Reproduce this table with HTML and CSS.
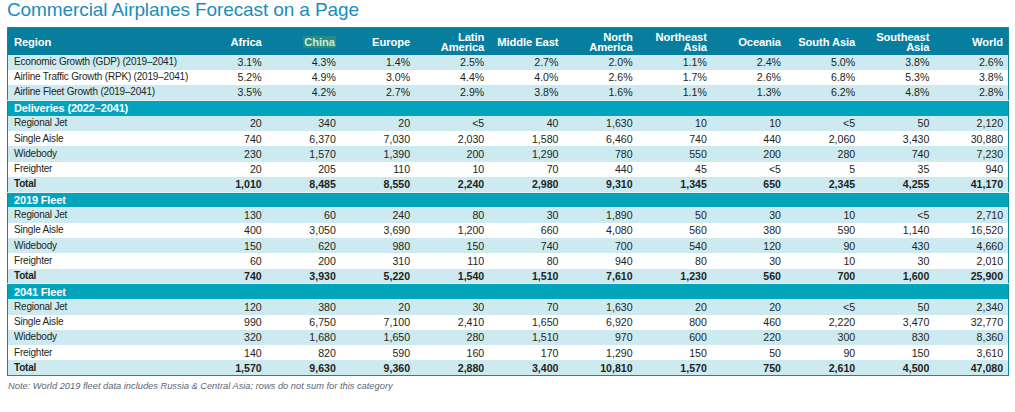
FILE: index.html
```html
<!DOCTYPE html>
<html>
<head>
<meta charset="utf-8">
<link rel="stylesheet" href="styles.css">
</head>
<body>
<h1 class="title">Commercial Airplanes Forecast on a Page</h1>
<table class="fc">
<colgroup><col class="c-label"><col span="11" class="c-num"></colgroup>
<thead>
<tr class="hdr">
<th class="lbl">Region</th><th>Africa</th><th><span class="hl">China</span></th><th>Europe</th><th>Latin<br>America</th><th>Middle East</th><th>North<br>America</th><th>Northeast<br>Asia</th><th>Oceania</th><th>South Asia</th><th>Southeast<br>Asia</th><th>World</th>
</tr>
</thead>
<tbody>
<tr class="lt"><td class="lbl">Economic Growth (GDP) (2019–2041)</td><td>3.1%</td><td>4.3%</td><td>1.4%</td><td>2.5%</td><td>2.7%</td><td>2.0%</td><td>1.1%</td><td>2.4%</td><td>5.0%</td><td>3.8%</td><td>2.6%</td></tr>
<tr class="wh"><td class="lbl">Airline Traffic Growth (RPK) (2019–2041)</td><td>5.2%</td><td>4.9%</td><td>3.0%</td><td>4.4%</td><td>4.0%</td><td>2.6%</td><td>1.7%</td><td>2.6%</td><td>6.8%</td><td>5.3%</td><td>3.8%</td></tr>
<tr class="lt"><td class="lbl">Airline Fleet Growth (2019–2041)</td><td>3.5%</td><td>4.2%</td><td>2.7%</td><td>2.9%</td><td>3.8%</td><td>1.6%</td><td>1.1%</td><td>1.3%</td><td>6.2%</td><td>4.8%</td><td>2.8%</td></tr>
<tr class="sec"><td colspan="12">Deliveries (2022–2041)</td></tr>
<tr class="lt"><td class="lbl">Regional Jet</td><td>20</td><td>340</td><td>20</td><td>&lt;5</td><td>40</td><td>1,630</td><td>10</td><td>10</td><td>&lt;5</td><td>50</td><td>2,120</td></tr>
<tr class="wh"><td class="lbl">Single Aisle</td><td>740</td><td>6,370</td><td>7,030</td><td>2,030</td><td>1,580</td><td>6,460</td><td>740</td><td>440</td><td>2,060</td><td>3,430</td><td>30,880</td></tr>
<tr class="lt"><td class="lbl">Widebody</td><td>230</td><td>1,570</td><td>1,390</td><td>200</td><td>1,290</td><td>780</td><td>550</td><td>200</td><td>280</td><td>740</td><td>7,230</td></tr>
<tr class="wh"><td class="lbl">Freighter</td><td>20</td><td>205</td><td>110</td><td>10</td><td>70</td><td>440</td><td>45</td><td>&lt;5</td><td>5</td><td>35</td><td>940</td></tr>
<tr class="lt tot"><td class="lbl">Total</td><td>1,010</td><td>8,485</td><td>8,550</td><td>2,240</td><td>2,980</td><td>9,310</td><td>1,345</td><td>650</td><td>2,345</td><td>4,255</td><td>41,170</td></tr>
<tr class="sec"><td colspan="12">2019 Fleet</td></tr>
<tr class="lt"><td class="lbl">Regional Jet</td><td>130</td><td>60</td><td>240</td><td>80</td><td>30</td><td>1,890</td><td>50</td><td>30</td><td>10</td><td>&lt;5</td><td>2,710</td></tr>
<tr class="wh"><td class="lbl">Single Aisle</td><td>400</td><td>3,050</td><td>3,690</td><td>1,200</td><td>660</td><td>4,080</td><td>560</td><td>380</td><td>590</td><td>1,140</td><td>16,520</td></tr>
<tr class="lt"><td class="lbl">Widebody</td><td>150</td><td>620</td><td>980</td><td>150</td><td>740</td><td>700</td><td>540</td><td>120</td><td>90</td><td>430</td><td>4,660</td></tr>
<tr class="wh"><td class="lbl">Freighter</td><td>60</td><td>200</td><td>310</td><td>110</td><td>80</td><td>940</td><td>80</td><td>30</td><td>10</td><td>30</td><td>2,010</td></tr>
<tr class="lt tot"><td class="lbl">Total</td><td>740</td><td>3,930</td><td>5,220</td><td>1,540</td><td>1,510</td><td>7,610</td><td>1,230</td><td>560</td><td>700</td><td>1,600</td><td>25,900</td></tr>
<tr class="sec"><td colspan="12">2041 Fleet</td></tr>
<tr class="lt"><td class="lbl">Regional Jet</td><td>120</td><td>380</td><td>20</td><td>30</td><td>70</td><td>1,630</td><td>20</td><td>20</td><td>&lt;5</td><td>50</td><td>2,340</td></tr>
<tr class="wh"><td class="lbl">Single Aisle</td><td>990</td><td>6,750</td><td>7,100</td><td>2,410</td><td>1,650</td><td>6,920</td><td>800</td><td>460</td><td>2,220</td><td>3,470</td><td>32,770</td></tr>
<tr class="lt"><td class="lbl">Widebody</td><td>320</td><td>1,680</td><td>1,650</td><td>280</td><td>1,510</td><td>970</td><td>600</td><td>220</td><td>300</td><td>830</td><td>8,360</td></tr>
<tr class="wh"><td class="lbl">Freighter</td><td>140</td><td>820</td><td>590</td><td>160</td><td>170</td><td>1,290</td><td>150</td><td>50</td><td>90</td><td>150</td><td>3,610</td></tr>
<tr class="lt tot"><td class="lbl">Total</td><td>1,570</td><td>9,630</td><td>9,360</td><td>2,880</td><td>3,400</td><td>10,810</td><td>1,570</td><td>750</td><td>2,610</td><td>4,500</td><td>47,080</td></tr>
</tbody>
</table>
<p class="note">Note: World 2019 fleet data includes Russia &amp; Central Asia; rows do not sum for this category</p>
</body>
</html>
```
FILE: styles.css
```css
* { box-sizing: border-box; }
body {
  margin: 0;
  padding: 0 7px;
  background: #fff;
  font-family: "Liberation Sans", Arial, sans-serif;
  color: #231f20;
}
.title {
  margin: 0;
  padding-top: 0;
  height: 27px;
  font-size: 19px;
  font-weight: normal;
  line-height: 20px;
  color: #1b8dba;
  letter-spacing: -0.1px;
}
.fc {
  width: 1001px;
  border-collapse: collapse;
  table-layout: fixed;
  border: 1px solid #1787a6;
  font-size: 10.6px;
}
.c-label { width: 185px; }
.c-num { width: 74.2px; }
.fc th, .fc td {
  padding: 0 5px 0 6px;
  text-align: right;
  white-space: nowrap;
}
.fc td.lbl {
  text-align: left;
  font-size: 10px;
  letter-spacing: -0.2px;
  padding-right: 0;
}
.fc th.lbl { text-align: left; }
.hdr { background: #087e9e; height: 27px; }
.hdr th {
  color: #fff;
  font-weight: bold;
  font-size: 11.2px;
  line-height: 10px;
  vertical-align: middle;
  padding-top: 1px;
  letter-spacing: -0.1px;
}
.hl {
  background: #2a8a86;
  color: #c7ecd0;
  padding: 0 1px;
  border-radius: 2px;
}
.fc tbody tr { height: 15.3px; }
.fc tbody td { line-height: 12px; vertical-align: middle; }
.lt { background: #cdeaf0; }
.wh { background: #fff; }
.sec { background: #01a3bd; }
.sec td {
  text-align: left;
  color: #fff;
  font-weight: bold;
  font-size: 11px;
  letter-spacing: -0.15px;
  border-top: 1px solid #e6f4f7;
}
.tot td { font-weight: bold; }
.note {
  margin: 5px 0 0 1px;
  font-size: 9.3px;
  font-style: italic;
  color: #5b6677;
}
```
